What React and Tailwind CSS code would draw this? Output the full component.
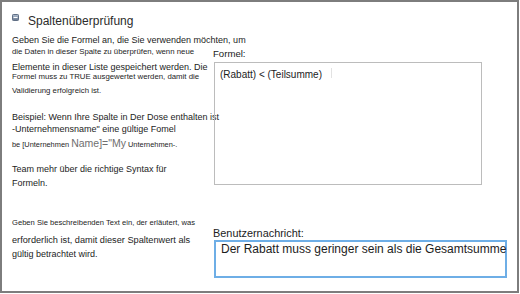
import React from 'react'

const font = { fontFamily: '"Liberation Sans", Arial, sans-serif' }

function CollapseIcon() {
  return (
    <svg width="7" height="7" viewBox="0 0 7 7" className="shrink-0">
      <defs>
        <linearGradient id="cg" x1="0" y1="0" x2="0" y2="1">
          <stop offset="0" stopColor="#b3c0d2" />
          <stop offset="1" stopColor="#66768d" />
        </linearGradient>
      </defs>
      <rect x="0.5" y="0.5" width="6" height="6" rx="0.8" fill="url(#cg)" stroke="#5f6e84" />
      <rect x="1.5" y="3" width="4" height="1" fill="#fff" />
    </svg>
  )
}

export default function App() {
  return (
    <div
      className="w-[519px] h-[293px] bg-white border-2 border-[#7d7d7d] text-[#1c1c1c] overflow-hidden"
      style={font}
    >
      {/* header */}
      <div className="flex items-start gap-[9px] pl-[10px] pt-[12px]">
        <CollapseIcon />
        <span className="text-[12px] leading-[14px] text-[#2b2b2b]">Spaltenüberprüfung</span>
      </div>

      {/* formula section */}
      <div className="flex pl-[10px] mt-[6px]">
        <div className="w-[201px] shrink-0 whitespace-nowrap">
          <div className="text-[9px] leading-[12px]">Geben Sie die Formel an, die Sie verwenden möchten, um</div>
          <div className="text-[7.8px] leading-[12px]">die Daten in dieser Spalte zu überprüfen, wenn neue</div>
          <div className="text-[9px] leading-[12px] mt-[3px]">Elemente in dieser Liste gespeichert werden. Die</div>
          <div className="text-[7.8px] leading-[12px] -mt-[2px]">Formel muss zu TRUE ausgewertet werden, damit die</div>
          <div className="text-[7.8px] leading-[12px] mt-[2px]">Validierung erfolgreich ist.</div>
          <div className="text-[9px] leading-[12px] mt-[14px]">Beispiel: Wenn Ihre Spalte in Der Dose enthalten ist</div>
          <div className="text-[9px] leading-[12px]">-Unternehmensname" eine gültige Fomel</div>
          <div className="text-[7.4px] leading-[12px] mt-[2px]">
            be [Unternehmen <span className="text-[10.5px] text-[#6f6f6f]">Name]="My</span> Unternehmen-.
          </div>
          <div className="text-[9px] leading-[12px] mt-[12px]">Team mehr über die richtige Syntax für</div>
          <div className="text-[9px] leading-[12px] mt-[2px]">Formeln.</div>
        </div>
        <div className="pt-[14px]">
          <div className="text-[9.6px] leading-[12px] text-[#222]">Formel:</div>
          <div className="ml-[1px] mt-[2px] w-[268px] h-[123px] border border-[#bcbcbc] pl-[5px] pt-[7px] text-[10px] leading-[10px] flex items-start">
            <span>(Rabatt) &lt; (Teilsumme)</span>
            <span className="ml-[9px] -mt-[2px] h-[10px] border-l border-[#e2e2e2]" />
          </div>
        </div>
      </div>

      {/* message section */}
      <div className="flex pl-[10px] mt-[28px]">
        <div className="w-[201px] shrink-0 whitespace-nowrap">
          <div className="text-[7.6px] leading-[12px]">Geben Sie beschreibenden Text ein, der erläutert, was</div>
          <div className="text-[9.2px] leading-[12px] mt-[5px]">erforderlich ist, damit dieser Spaltenwert als</div>
          <div className="text-[9px] leading-[12px] mt-[2px]">gültig betrachtet wird.</div>
        </div>
        <div className="pt-[10px]">
          <div className="text-[10.9px] leading-[12px] text-[#222]">Benutzernachricht:</div>
          <div className="ml-[1px] mt-[1px] w-[293px] h-[38px] border-2 border-[#6eaee6] pl-[5px] text-[12px] leading-[14px] whitespace-nowrap">
            Der Rabatt muss geringer sein als die Gesamtsumme
          </div>
        </div>
      </div>
    </div>
  )
}
